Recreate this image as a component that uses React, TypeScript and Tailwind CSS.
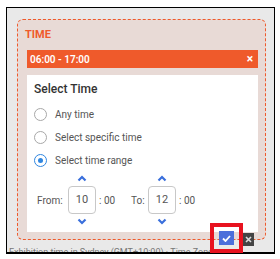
import React from "react";

const Radio = ({ checked, label }: { checked?: boolean; label: string }) => (
  <div className="flex h-[23px] items-center gap-[8px]">
    <span
      className={
        "flex h-[13px] w-[13px] items-center justify-center rounded-full border bg-white " +
        (checked ? "border-[#2f86e0]" : "border-[#a8a8a8]")
      }
    >
      {checked && <span className="h-[5px] w-[5px] rounded-full bg-[#2f86e0]" />}
    </span>
    <span className="text-[10px] text-[#555]">{label}</span>
  </div>
);

const Chevron = ({ up }: { up?: boolean }) => (
  <svg width="10" height="7" viewBox="0 0 10 7" className="block">
    <path
      d={up ? "M1.5 5.5 L5 2 L8.5 5.5" : "M1.5 1.5 L5 5 L8.5 1.5"}
      fill="none"
      stroke="#3a6fdc"
      strokeWidth="2.2"
    />
  </svg>
);

const TimeInput = ({ value }: { value: string }) => (
  <div className="flex flex-col items-center">
    <Chevron up />
    <div className="my-[4px] flex h-[28px] w-[28px] items-center justify-center rounded-[4px] border border-[#c8c8c8] text-[11px] text-[#555]">
      {value}
    </div>
    <Chevron />
  </div>
);

export default function App() {
  return (
    <div
      className="relative h-[259px] w-[280px] overflow-hidden bg-white pl-[6px] pt-[7px]"
      style={{ fontFamily: "Roboto, 'Liberation Sans', sans-serif" }}
    >
      <div className="relative h-[247px] w-[269px] overflow-hidden border border-b-2 border-black bg-[#e9e9e9]">
        <div className="ml-[10px] mt-[11px] h-[221px] w-[249px] rounded-[6px] border border-dashed border-[#ee5a2c] bg-[#e8dad6] pl-[9px] pr-[7px]">
          <div className="-ml-[2px] pt-[8px] text-[11px] font-bold leading-[13px] text-[#ef5a2b]">
            TIME
          </div>
          <div className="mt-[9px] flex h-[18px] items-center justify-between bg-[#ef5a2b] pl-[3px] pr-[5px] text-[10px] font-semibold text-white">
            <span>06:00 - 17:00</span>
            <span className="text-[12px] font-bold leading-none">×</span>
          </div>
          <div className="mt-[7px] h-[157px] bg-white pl-[7px] pt-[7px]">
            <div className="text-[12px] font-medium leading-[14px] text-[#333]">Select Time</div>
            <div className="mt-[7px] flex flex-col">
              <Radio label="Any time" />
              <Radio label="Select specific time" />
              <Radio checked label="Select time range" />
            </div>
            <div className="mt-[3px] flex items-center text-[10px] text-[#555]">
              <span className="ml-[3px] w-[31px]">From:</span>
              <TimeInput value="10" />
              <span className="ml-[3px] w-[32px]">: 00</span>
              <span className="w-[17px]">To:</span>
              <TimeInput value="12" />
              <span className="ml-[3px]">: 00</span>
            </div>
          </div>
        </div>
        <div className="mt-[7px] whitespace-nowrap pl-[2px] text-[9px] leading-[11px] text-[#777]">
          Exhibition time in Sydney (GMT+10:00) · Time Zone
        </div>
      </div>
      <div className="absolute left-[210px] top-[223px] flex h-[30px] w-[33px] items-center justify-center border-[4px] border-[#e8121f]">
        <span className="flex h-[14px] w-[15px] items-center justify-center bg-[#4c6fdb]">
          <svg width="9" height="7" viewBox="0 0 9 7">
            <path d="M1 3.5 L3.5 6 L8 1" fill="none" stroke="white" strokeWidth="1.8" />
          </svg>
        </span>
      </div>
      <span className="absolute left-[243px] top-[233px] flex h-[13px] w-[11px] items-center justify-center bg-[#444]">
        <svg width="7" height="7" viewBox="0 0 7 7">
          <path d="M1 1 L6 6 M6 1 L1 6" stroke="#ddd" strokeWidth="1.6" />
        </svg>
      </span>
    </div>
  );
}
